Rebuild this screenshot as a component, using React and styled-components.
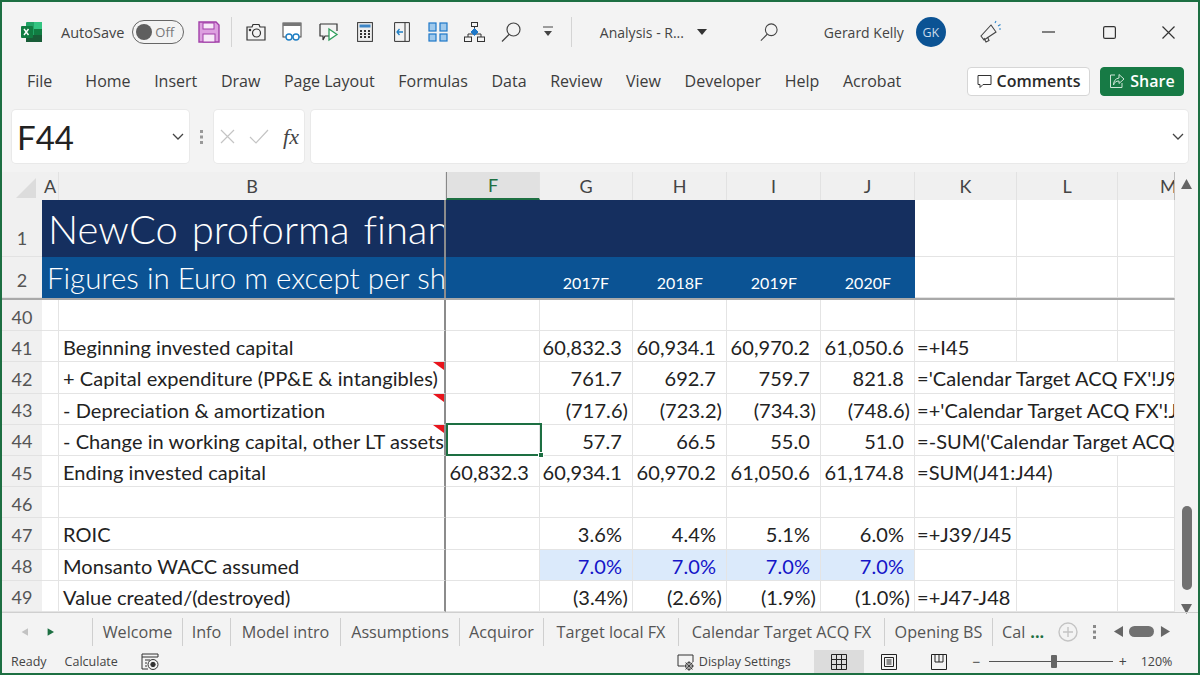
import React from "react";
import styled, { createGlobalStyle } from "styled-components";

const uiFont = `"Open Sans", "Noto Sans", sans-serif`;
const sheetFont = `Lato, "Liberation Sans", sans-serif`;

const GlobalStyle = createGlobalStyle`
	html, body {
		margin: 0;
		padding: 0;
		background: #f3f3f3;
	}
	* {
		box-sizing: border-box;
	}
`;

const Window = styled.div`
	width: 1200px;
	height: 675px;
	border: 2px solid #1d6f42;
	background: #f3f3f3;
	display: flex;
	flex-direction: column;
	overflow: hidden;
	font-family: ${uiFont};
	color: #333;
`;

/* title bar */
const TitleBar = styled.div`
	height: 60px;
	flex: none;
	display: flex;
	align-items: center;
	padding-left: 18px;
`;

const AutoSaveLabel = styled.span`
	margin-left: 17px;
	font-size: 14.5px;
	color: #444;
`;

const Toggle = styled.div`
	margin-left: 8px;
	width: 52px;
	height: 24px;
	border: 1.5px solid #666;
	border-radius: 12px;
	display: flex;
	align-items: center;
	padding-left: 3px;
	gap: 3px;
	font-size: 13px;
	color: #777;
`;

const ToggleKnob = styled.span`
	width: 16px;
	height: 16px;
	border-radius: 50%;
	background: #5f5f5f;
`;

const SaveSlot = styled.div`
	margin-left: 14px;
	display: flex;
`;

const Divider = styled.div`
	width: 1px;
	height: 30px;
	background: #d4d4d4;
	margin-left: ${(p) => p.$left}px;
`;

const QuickIcon = styled.div`
	width: 36.5px;
	display: flex;
	justify-content: center;
	align-items: center;
`;

const QuickGroup = styled.div`
	margin-left: 5px;
	display: flex;
	align-items: center;
`;

const DocTitle = styled.div`
	margin-left: 28px;
	width: 97px;
	font-size: 14px;
	color: #444;
	white-space: nowrap;
`;

const SearchSlot = styled.div`
	margin-left: 53px;
	display: flex;
`;

const UserName = styled.div`
	margin-left: 46px;
	font-size: 14px;
	color: #444;
`;

const Avatar = styled.div`
	margin-left: 12px;
	width: 30px;
	height: 30px;
	border-radius: 50%;
	background: #0b5394;
	color: #c9d9ea;
	font-size: 12.5px;
	display: flex;
	align-items: center;
	justify-content: center;
`;

const WindowButtons = styled.div`
	margin-left: 33px;
	display: flex;
	align-items: center;
`;

const WindowButton = styled.div`
	display: flex;
	margin-left: ${(p) => p.$left}px;
`;

/* ribbon tabs */
const MenuBar = styled.div`
	height: 42px;
	flex: none;
	display: flex;
	align-items: center;
	padding: 0 14px 4px 25px;
	font-size: 16px;
	color: #3c3c3c;
`;

const MenuItem = styled.span`
	margin-right: ${(p) => p.$gap || 23.6}px;
	white-space: nowrap;
`;

const MenuActions = styled.div`
	margin-left: auto;
	display: flex;
	gap: 10px;
`;

const CommentsButton = styled.div`
	width: 123px;
	height: 29px;
	background: #fff;
	border: 1px solid #d6d6d6;
	border-radius: 4px;
	display: flex;
	align-items: center;
	justify-content: center;
	gap: 5px;
	font-size: 16px;
	font-weight: 600;
	color: #2a2a2a;
`;

const ShareButton = styled(CommentsButton)`
	width: 84px;
	background: #177a45;
	border-color: #177a45;
	color: #fff;
`;

/* formula bar */
const FormulaBar = styled.div`
	height: 68px;
	flex: none;
	display: flex;
	align-items: flex-start;
	padding: 6px 10px 0 10px;
`;

const Field = styled.div`
	height: 53px;
	background: #fff;
	border-radius: 4px;
	box-shadow: 0 0 0 1px #e9e9e9;
	display: flex;
	align-items: center;
`;

const NameBox = styled(Field)`
	width: 177px;
	padding: 0 5px 0 5px;
	justify-content: space-between;
	font-family: ${sheetFont};
	font-size: 33px;
	color: #222;
`;

const GripSlot = styled.div`
	width: 25px;
	height: 53px;
	display: flex;
	align-items: center;
	justify-content: center;
`;

const FxBox = styled(Field)`
	width: 90px;
	padding: 0 5px 0 6px;
	justify-content: space-between;
`;

const FxLabel = styled.span`
	font-family: "Liberation Serif", serif;
	font-style: italic;
	font-size: 22px;
	color: #444;
`;

const FormulaInput = styled(Field)`
	margin-left: 7px;
	flex: 1;
	justify-content: flex-end;
	padding-right: 4px;
`;

/* sheet */
const SheetArea = styled.div`
	display: flex;
	height: 440px;
	flex: none;
`;

const SheetMain = styled.div`
	width: 1173px;
	border-right: 1px solid #bdbdbd;
	font-family: ${sheetFont};
	position: relative;
`;

const columnTemplate = "40px 17px 387px 94px 93px 94px 94px 94px 102px 101px 57px";

const HeaderRow = styled.div`
	display: grid;
	grid-template-columns: ${columnTemplate};
	height: 28px;
	background: #f0f0f0;
	overflow: hidden;
`;

const Corner = styled.div`
	position: relative;
`;

const CornerMark = styled.div`
	position: absolute;
	right: 6px;
	bottom: 2px;
	width: 0;
	height: 0;
	border-left: 20px solid transparent;
	border-bottom: 20px solid #dcdcdc;
`;

const ColumnHead = styled.div`
	display: flex;
	align-items: center;
	justify-content: ${(p) => (p.$clipped ? "flex-start" : "center")};
	padding-left: ${(p) => (p.$clipped ? 42 : 0)}px;
	font-size: 18px;
	color: ${(p) => (p.$active ? "#1d6f42" : "#444")};
	background: ${(p) => (p.$active ? "#e1e1e1" : "transparent")};
	border-bottom: ${(p) => (p.$active ? "2px solid #1d6f42" : "none")};
	border-right: 1px solid #e2e2e2;
	border-left: ${(p) => (p.$frozen ? "1px solid #888" : "none")};
	white-space: nowrap;
	overflow: hidden;
`;

const Row = styled.div`
	display: grid;
	grid-template-columns: ${columnTemplate};
	height: ${(p) => p.$height}px;
	border-bottom: ${(p) => (p.$freeze ? "2px solid #a9a9a9" : "none")};
`;

const RowHead = styled.div`
	background: #f0f0f0;
	color: #555;
	font-size: 18px;
	display: flex;
	justify-content: center;
	align-items: ${(p) => (p.$low ? "flex-end" : "center")};
	padding-top: ${(p) => (p.$low ? 0 : 3)}px;
	padding-bottom: ${(p) => (p.$low ? p.$low : 0)}px;
	border-bottom: 1px solid #e2e2e2;
`;

const Cell = styled.div`
	position: relative;
	display: flex;
	align-items: center;
	justify-content: ${(p) => (p.$right ? "flex-end" : "flex-start")};
	grid-column: span ${(p) => p.$span || 1};
	padding-top: 2px;
	padding-right: ${(p) => (p.$right ? (p.$neg ? 4 : 10) : 0)}px;
	padding-left: ${(p) => (p.$right ? 0 : p.$pad || 0)}px;
	background: ${(p) => p.$fill || "#fff"};
	color: ${(p) => p.$ink || "#222"};
	font-size: 20px;
	letter-spacing: 0.07px;
	white-space: nowrap;
	overflow: hidden;
	border-right: 1px solid ${(p) => (p.$freeze ? "#8c8c8c" : "#e4e4e4")};
	border-bottom: 1px solid #e4e4e4;
	${(p) => p.$freeze && "border-right-width: 2px;"}
`;

const BannerCell = styled.div`
	grid-column: span ${(p) => p.$span || 1};
	background: ${(p) => p.$fill};
	color: #fff;
	font-weight: ${(p) => p.$weight || 400};
	font-size: ${(p) => p.$size || 16}px;
	font-variant-ligatures: none;
	word-spacing: ${(p) => p.$words || 0}px;
	white-space: nowrap;
	overflow: hidden;
	display: flex;
	align-items: center;
	padding-left: ${(p) => p.$pad || 0}px;
	border-right: ${(p) => (p.$freeze ? "2px solid #8c8c8c" : "none")};
`;

const YearCell = styled(BannerCell)`
	justify-content: flex-end;
	padding-right: 24px;
	padding-top: 9px;
`;

const SelectionFrame = styled.div`
	position: absolute;
	left: 444px;
	top: 251px;
	width: 96px;
	height: 33px;
	border: 2px solid #1d6f42;
`;

const SelectionHandle = styled.div`
	position: absolute;
	right: -4px;
	bottom: -4px;
	width: 6px;
	height: 6px;
	background: #1d6f42;
	border: 1px solid #fff;
`;

const CommentMark = styled.div`
	position: absolute;
	right: 0;
	top: 0;
	width: 0;
	height: 0;
	border-left: 11px solid transparent;
	border-top: 8px solid #e8141c;
`;

const ScrollBar = styled.div`
	width: 23px;
	display: flex;
	flex-direction: column;
	align-items: center;
	padding-top: 5px;
`;

const ScrollThumb = styled.div`
	margin-top: auto;
	margin-bottom: 12px;
	width: 10px;
	height: 84px;
	border-radius: 5px;
	background: #717171;
`;

const ScrollDown = styled.div`
	display: flex;
	margin-bottom: -2px;
`;

/* sheet tabs */
const TabBar = styled.div`
	height: 38px;
	flex: none;
	display: flex;
	align-items: center;
	font-size: 16.2px;
	color: #555;
	border-top: 1px solid #cfcfcf;
	position: relative;
`;

const TabNav = styled.div`
	width: 90px;
	flex: none;
	display: flex;
	align-items: center;
	gap: 19px;
	padding-left: 19px;
`;

const Tab = styled.div`
	height: 28px;
	width: ${(p) => p.$w}px;
	flex: none;
	display: flex;
	align-items: center;
	justify-content: center;
	border-left: 1px solid #cfcfcf;
	white-space: nowrap;
	overflow: hidden;
`;

const ClippedTab = styled(Tab)`
	justify-content: flex-start;
	padding-left: 9px;
`;

const MoreTabs = styled.span`
	color: #1d6f42;
	font-weight: 700;
	margin-left: 5px;
	flex: none;
`;

const TabTools = styled.div`
	display: flex;
	align-items: center;
`;

const ToolSlot = styled.div`
	display: flex;
	margin-left: ${(p) => p.$left}px;
`;

const HScroll = styled.div`
	width: 25px;
	height: 11px;
	border-radius: 6px;
	background: #717171;
	margin-left: ${(p) => p.$left}px;
`;

/* status bar */
const StatusBar = styled.div`
	height: 23px;
	flex: none;
	display: flex;
	align-items: center;
	padding-left: 9px;
	font-size: 12.5px;
	color: #444;
`;

const StatusText = styled.span`
	margin-left: ${(p) => p.$left || 0}px;
	white-space: nowrap;
`;

const StatusSlot = styled.div`
	display: flex;
	margin-left: ${(p) => p.$left}px;
`;

const ViewButton = styled.div`
	width: 50px;
	height: 23px;
	display: flex;
	align-items: center;
	justify-content: center;
	background: ${(p) => (p.$active ? "#dcdcdc" : "transparent")};
	margin-left: ${(p) => p.$left || 0}px;
`;

const ZoomTrack = styled.div`
	position: relative;
	width: 124px;
	height: 1px;
	background: #555;
	margin-left: 8px;
`;

const ZoomThumb = styled.div`
	position: absolute;
	left: 62px;
	top: -6px;
	width: 6px;
	height: 13px;
	background: #666;
	border-radius: 1px;
`;

const ZoomSign = styled.span`
	font-size: 14px;
	margin-left: ${(p) => p.$left}px;
`;

/* drawings */
const ExcelLogo = () => (
	<svg width="24" height="24" viewBox="0 0 24 24">
		<rect x="6" y="2" width="16" height="20" rx="1" fill="#21a366" />
		<rect x="14" y="2" width="8" height="7" fill="#33c481" />
		<rect x="6" y="15" width="16" height="7" fill="#185c37" />
		<rect x="14" y="9" width="8" height="6" fill="#107c41" />
		<rect x="1" y="6" width="12" height="12" rx="1" fill="#107c41" />
		<path d="M4 9l4.5 6M8.5 9L4 15" stroke="#fff" strokeWidth="1.4" />
	</svg>
);

const SaveIcon = () => (
	<svg width="22" height="22" viewBox="0 0 22 22">
		<path d="M1 1h17l3 3v17H1z" fill="#dd9fe0" stroke="#a13fa8" strokeWidth="1.4" />
		<rect x="5" y="2" width="11" height="6" fill="#f7e8f8" stroke="#a13fa8" />
		<rect x="5" y="13" width="12" height="8" fill="#f7e8f8" stroke="#a13fa8" />
	</svg>
);

const CameraIcon = () => (
	<svg width="20" height="18" viewBox="0 0 20 18" fill="none" stroke="#333" strokeWidth="1.2">
		<path d="M1 4h5l1-2.500h6l1 2.500h5v13H1z" />
		<circle cx="10.500" cy="10" r="4" />
		<circle cx="4" cy="7" r=".7" />
	</svg>
);

const ReadIcon = () => (
	<svg width="20" height="20" viewBox="0 0 20 20" fill="none">
		<rect x="1" y="1" width="18" height="14" stroke="#444" fill="#fff" />
		<rect x="1" y="1" width="18" height="3" fill="#777" />
		<circle cx="7" cy="15" r="3" stroke="#1f7fc4" strokeWidth="1.4" fill="#fff" />
		<circle cx="14" cy="15" r="3" stroke="#1f7fc4" strokeWidth="1.4" fill="#fff" />
	</svg>
);

const PlayNoteIcon = () => (
	<svg width="20" height="20" viewBox="0 0 20 20" fill="none">
		<path d="M1 2h17v7M10 14H6l-2 4v-4H1V2" stroke="#333" strokeWidth="1.2" />
		<path d="M10 7l8 5.500-8 5.500z" stroke="#2e9e5b" strokeWidth="1.3" fill="#fff" />
	</svg>
);

const CalcIcon = () => (
	<svg width="16" height="20" viewBox="0 0 16 20">
		<rect x=".6" y=".6" width="14.800" height="18.800" fill="#eee" stroke="#333" />
		<rect x="2.500" y="2.500" width="11" height="3" fill="#3d85c6" />
		{[8, 11, 14].map((y) =>
			[3, 7, 11].map((x) => <rect key={`${x}${y}`} x={x} y={y} width="2" height="2" fill="#333" />),
		)}
	</svg>
);

const BackIcon = () => (
	<svg width="16" height="20" viewBox="0 0 16 20" fill="none">
		<path d="M.6.6h14.800v18.800H.6zM11 .6v18.800" stroke="#333" />
		<path d="M9 10H3M5.500 7L3 10l2.500 3" stroke="#1f7fc4" strokeWidth="1.3" />
	</svg>
);

const PanesIcon = () => (
	<svg width="20" height="20" viewBox="0 0 20 20" fill="#9fc9ec" stroke="#1f78c8" strokeWidth="1.2">
		<rect x="1" y="1" width="7" height="8" />
		<rect x="12" y="1" width="7" height="8" />
		<rect x="1" y="12" width="7" height="7" />
		<rect x="12" y="12" width="7" height="7" />
	</svg>
);

const OrgIcon = () => (
	<svg width="21" height="20" viewBox="0 0 21 20" fill="none" stroke="#333">
		<rect x="7.500" y=".5" width="6" height="4" />
		<path d="M10.500 4.500v3M4 15v-3h13v3" />
		<path d="M10.500 6.500l3.500 3.500-3.500 3.500L7 10z" fill="#1f78c8" stroke="#1f78c8" />
		<rect x=".5" y="15" width="7" height="4.500" />
		<rect x="13.500" y="15" width="7" height="4.500" />
	</svg>
);

const SearchIcon = ({ size = 20 }) => (
	<svg width={size} height={size} viewBox="0 0 20 20" fill="none" stroke="#444" strokeWidth="1.2">
		<circle cx="12.500" cy="7.500" r="6.500" />
		<path d="M8 12.500L1 19.500" />
	</svg>
);

const QatMore = () => (
	<svg width="10" height="12" viewBox="0 0 10 12">
		<path d="M0 1h10" stroke="#444" />
		<path d="M1 5h8l-4 5z" fill="#444" />
	</svg>
);

const Caret = () => (
	<svg width="10" height="6" viewBox="0 0 10 6">
		<path d="M0 0h10L5 6z" fill="#333" />
	</svg>
);

const Megaphone = () => (
	<svg width="22" height="24" viewBox="0 0 22 24" fill="none" stroke="#444" strokeWidth="1.1">
		<path d="M12 5l5 7-12 8-3-4z" />
		<path d="M5 18l2 4 3-1.500-1.500-3.500" />
		<path d="M16 3l1-2M19 6l2.500-1.500M20 9h2" stroke="#2f86c9" />
	</svg>
);

const Chevron = ({ color = "#444" }) => (
	<svg width="12" height="8" viewBox="0 0 12 8" fill="none">
		<path d="M1 1l5 5 5-5" stroke={color} strokeWidth="1.3" />
	</svg>
);

const Grip = ({ color = "#999" }) => (
	<svg width="3" height="14" viewBox="0 0 3 14" fill={color}>
		<rect y="0" width="3" height="3" />
		<rect y="5.500" width="3" height="3" />
		<rect y="11" width="3" height="3" />
	</svg>
);

const Triangle = ({ dir, color = "#666", w = 11, h = 12 }) => {
	const shapes = {
		up: "M0 12L5.500 2 11 12z",
		down: "M0 2h11L5.500 12z",
		left: "M11 0v12L1 6z",
		right: "M1 0l10 6-10 6z",
	};
	return (
		<svg width={w} height={h} viewBox="0 0 11 12">
			<path d={shapes[dir]} fill={color} />
		</svg>
	);
};

const columns = ["F", "G", "H", "I", "J", "K", "L", "M"];
const years = ["2017F", "2018F", "2019F", "2020F"];

const rows = [
	{ n: 40 },
	{ n: 41, label: "Beginning invested capital", vals: ["", "60,832.3", "60,934.1", "60,970.2", "61,050.6"], formula: "=+I45" },
	{ n: 42, label: "+ Capital expenditure (PP&E & intangibles)", note: true, vals: ["", "761.7", "692.7", "759.7", "821.8"], formula: "='Calendar Target ACQ FX'!J9", span: 3 },
	{ n: 43, label: "- Depreciation & amortization", note: true, vals: ["", "(717.6)", "(723.2)", "(734.3)", "(748.6)"], formula: "=+'Calendar Target ACQ FX'!J", span: 3 },
	{ n: 44, label: "- Change in working capital, other LT assets", note: true, vals: ["", "57.7", "66.5", "55.0", "51.0"], formula: "=-SUM('Calendar Target ACQ FX", span: 3 },
	{ n: 45, label: "Ending invested capital", vals: ["60,832.3", "60,934.1", "60,970.2", "61,050.6", "61,174.8"], formula: "=SUM(J41:J44)", span: 2 },
	{ n: 46 },
	{ n: 47, label: "ROIC", vals: ["", "3.6%", "4.4%", "5.1%", "6.0%"], formula: "=+J39/J45" },
	{ n: 48, label: "Monsanto WACC assumed", vals: ["", "7.0%", "7.0%", "7.0%", "7.0%"], input: true },
	{ n: 49, label: "Value created/(destroyed)", vals: ["", "(3.4%)", "(2.6%)", "(1.9%)", "(1.0%)"], formula: "=+J47-J48" },
];

const tabs = [
	["Welcome", 90],
	["Info", 48],
	["Model intro", 110],
	["Assumptions", 119],
	["Acquiror", 84],
	["Target local FX", 135],
	["Calendar Target ACQ FX", 206],
	["Opening BS", 108],
];

function SheetRow({ row }) {
	const vals = row.vals || ["", "", "", "", ""];
	const used = row.span || 1;
	return (
		<Row $height={31.2}>
			<RowHead>{row.n}</RowHead>
			<Cell />
			<Cell $freeze $pad={4}>
				{row.label}
				{row.note && <CommentMark />}
			</Cell>
			{vals.map((v, i) => {
				const blue = row.input && i > 0;
				return (
					<Cell
						key={i}
						$right
						$neg={v.startsWith("(")}
						$fill={blue ? "#dbeafb" : undefined}
						$ink={blue ? "#1414c8" : undefined}
					>
						{v}
					</Cell>
				);
			})}
			<Cell $span={used} $pad={2}>
				{row.formula}
			</Cell>
			{used < 2 && <Cell />}
			{used < 3 && <Cell />}
		</Row>
	);
}

export default function App() {
	return (
		<Window>
			<GlobalStyle />
			<TitleBar>
				<ExcelLogo />
				<AutoSaveLabel>AutoSave</AutoSaveLabel>
				<Toggle>
					<ToggleKnob />
					Off
				</Toggle>
				<SaveSlot>
					<SaveIcon />
				</SaveSlot>
				<Divider $left={11} />
				<QuickGroup>
					<QuickIcon><CameraIcon /></QuickIcon>
					<QuickIcon><ReadIcon /></QuickIcon>
					<QuickIcon><PlayNoteIcon /></QuickIcon>
					<QuickIcon><CalcIcon /></QuickIcon>
					<QuickIcon><BackIcon /></QuickIcon>
					<QuickIcon><PanesIcon /></QuickIcon>
					<QuickIcon><OrgIcon /></QuickIcon>
					<QuickIcon><SearchIcon /></QuickIcon>
					<QuickIcon><QatMore /></QuickIcon>
				</QuickGroup>
				<Divider $left={5} />
				<DocTitle>Analysis - R...</DocTitle>
				<Caret />
				<SearchSlot>
					<SearchIcon size={18} />
				</SearchSlot>
				<UserName>Gerard Kelly</UserName>
				<Avatar>GK</Avatar>
				<WindowButtons>
					<Megaphone />
					<WindowButton $left={41}>
						<svg width="13" height="2" viewBox="0 0 13 2"><path d="M0 1h13" stroke="#333" strokeWidth="1.2" /></svg>
					</WindowButton>
					<WindowButton $left={48}>
						<svg width="13" height="13" viewBox="0 0 13 13" fill="none"><rect x=".6" y=".6" width="11.800" height="11.800" rx="1.500" stroke="#333" strokeWidth="1.2" /></svg>
					</WindowButton>
					<WindowButton $left={46}>
						<svg width="13" height="13" viewBox="0 0 13 13"><path d="M.5.5l12 12M12.500.5l-12 12" stroke="#333" strokeWidth="1.2" /></svg>
					</WindowButton>
				</WindowButtons>
			</TitleBar>

			<MenuBar>
				<MenuItem $gap={33}>File</MenuItem>
				<MenuItem>Home</MenuItem>
				<MenuItem>Insert</MenuItem>
				<MenuItem>Draw</MenuItem>
				<MenuItem>Page Layout</MenuItem>
				<MenuItem>Formulas</MenuItem>
				<MenuItem>Data</MenuItem>
				<MenuItem>Review</MenuItem>
				<MenuItem>View</MenuItem>
				<MenuItem>Developer</MenuItem>
				<MenuItem>Help</MenuItem>
				<MenuItem>Acrobat</MenuItem>
				<MenuActions>
					<CommentsButton>
						<svg width="15" height="15" viewBox="0 0 15 15" fill="none">
							<path d="M1 1.500h13v9H6l-3 3v-3H1z" stroke="#333" />
						</svg>
						Comments
					</CommentsButton>
					<ShareButton>
						<svg width="16" height="16" viewBox="0 0 16 16" fill="none" stroke="#cfe6d8">
							<path d="M6 2H1.500v12.500H13V10" />
							<path d="M10 1.500l5 4.500-5 4.500V8C7 8 5.500 9 4.500 12c0-4 2-6.500 5.500-7z" />
						</svg>
						Share
					</ShareButton>
				</MenuActions>
			</MenuBar>

			<FormulaBar>
				<NameBox>
					F44
					<Chevron />
				</NameBox>
				<GripSlot>
					<Grip />
				</GripSlot>
				<FxBox>
					<svg width="15" height="15" viewBox="0 0 15 15"><path d="M1 1l13 13M14 1L1 14" stroke="#c4c4c4" strokeWidth="1.2" /></svg>
					<svg width="20" height="15" viewBox="0 0 20 15" fill="none"><path d="M1 8l6 6L19 1" stroke="#c4c4c4" strokeWidth="1.2" /></svg>
					<FxLabel>fx</FxLabel>
				</FxBox>
				<FormulaInput>
					<Chevron />
				</FormulaInput>
			</FormulaBar>

			<SheetArea>
				<SheetMain>
					<HeaderRow>
						<Corner>
							<CornerMark />
						</Corner>
						<ColumnHead>A</ColumnHead>
						<ColumnHead>B</ColumnHead>
						{columns.map((c) => (
							<ColumnHead key={c} $active={c === "F"} $frozen={c === "F"} $clipped={c === "M"}>
								{c}
							</ColumnHead>
						))}
					</HeaderRow>
					<Row $height={57}>
						<RowHead $low={7}>1</RowHead>
						<BannerCell $span={2} $fill="#152f5f" $size={40} $weight={300} $pad={6} $words={3} $freeze>
							NewCo proforma financials
						</BannerCell>
						<BannerCell $span={5} $fill="#152f5f" />
						<Cell />
						<Cell />
						<Cell />
					</Row>
					<Row $height={43} $freeze>
						<RowHead $low={6}>2</RowHead>
						<BannerCell $span={2} $fill="#0b5394" $size={29.5} $weight={300} $pad={5} $freeze>
							Figures in Euro m except per share data
						</BannerCell>
						<BannerCell $fill="#0b5394" />
						{years.map((y) => (
							<YearCell key={y} $fill="#0b5394">
								{y}
							</YearCell>
						))}
						<Cell />
						<Cell />
						<Cell />
					</Row>
					{rows.map((row) => (
						<SheetRow key={row.n} row={row} />
					))}
					<SelectionFrame>
						<SelectionHandle />
					</SelectionFrame>
				</SheetMain>
				<ScrollBar>
					<Triangle dir="up" />
					<ScrollThumb />
					<ScrollDown>
						<Triangle dir="down" />
					</ScrollDown>
				</ScrollBar>
			</SheetArea>

			<TabBar>
				<TabNav>
					<Triangle dir="left" color="#c2c2c2" w={7} h={10} />
					<Triangle dir="right" color="#1d6f42" w={7} h={10} />
				</TabNav>
				{tabs.map(([name, w]) => (
					<Tab key={name} $w={w}>
						{name}
					</Tab>
				))}
				<ClippedTab $w={66}>
					Cal
					<MoreTabs>...</MoreTabs>
				</ClippedTab>
				<TabTools>
					<ToolSlot $left={0}>
						<svg width="20" height="20" viewBox="0 0 20 20" fill="none" stroke="#c4c4c4" strokeWidth="1.4">
							<circle cx="10" cy="10" r="9" />
							<path d="M10 5v10M5 10h10" />
						</svg>
					</ToolSlot>
					<ToolSlot $left={15}>
						<Grip color="#8a8a8a" />
					</ToolSlot>
					<ToolSlot $left={17}>
						<Triangle dir="left" w={10} h={11} />
					</ToolSlot>
					<HScroll $left={6} />
					<ToolSlot $left={6}>
						<Triangle dir="right" w={10} h={11} />
					</ToolSlot>
				</TabTools>
			</TabBar>

			<StatusBar>
				<StatusText>Ready</StatusText>
				<StatusText $left={18}>Calculate</StatusText>
				<StatusSlot $left={23}>
					<svg width="18" height="18" viewBox="0 0 18 18" fill="none" stroke="#333">
						<path d="M1 1h16v3H1zM1 4v12h6M4 7h5M4 10h2M4 13h2" />
						<circle cx="12" cy="11.500" r="5" fill="#f3f3f3" />
						<circle cx="12" cy="11.500" r="2.200" fill="#333" />
					</svg>
				</StatusSlot>
				<StatusSlot $left={518}>
					<svg width="18" height="18" viewBox="0 0 18 18" fill="none" stroke="#333">
						<path d="M7 13H1V2h15v7" />
						<circle cx="12" cy="13" r="3.500" />
						<path d="M12 8v10M7 13h10M8.500 9.500l7 7M15.500 9.500l-7 7" strokeWidth=".8" />
					</svg>
				</StatusSlot>
				<StatusText $left={4}>Display Settings</StatusText>
				<ViewButton $active $left={23}>
					<svg width="16" height="16" viewBox="0 0 16 16" fill="none" stroke="#222">
						<path d="M.5.5h15v15H.5zM5.500.5v15M10.500.5v15M.5 5.500h15M.5 10.500h15" />
					</svg>
				</ViewButton>
				<ViewButton>
					<svg width="16" height="16" viewBox="0 0 16 16" fill="none" stroke="#222">
						<path d="M.5.5h15v15H.5zM3.500 3.500h9v9h-9zM5.500 6h5M5.500 8h5M5.500 10h5" />
					</svg>
				</ViewButton>
				<ViewButton>
					<svg width="16" height="16" viewBox="0 0 16 16" fill="none" stroke="#222">
						<path d="M.5.5h15v15H.5zM4 .5V8h8V.5M8 .5V8" />
					</svg>
				</ViewButton>
				<ZoomSign $left={9}>−</ZoomSign>
				<ZoomTrack>
					<ZoomThumb />
				</ZoomTrack>
				<ZoomSign $left={6}>+</ZoomSign>
				<StatusText $left={14}>120%</StatusText>
			</StatusBar>
		</Window>
	);
}
